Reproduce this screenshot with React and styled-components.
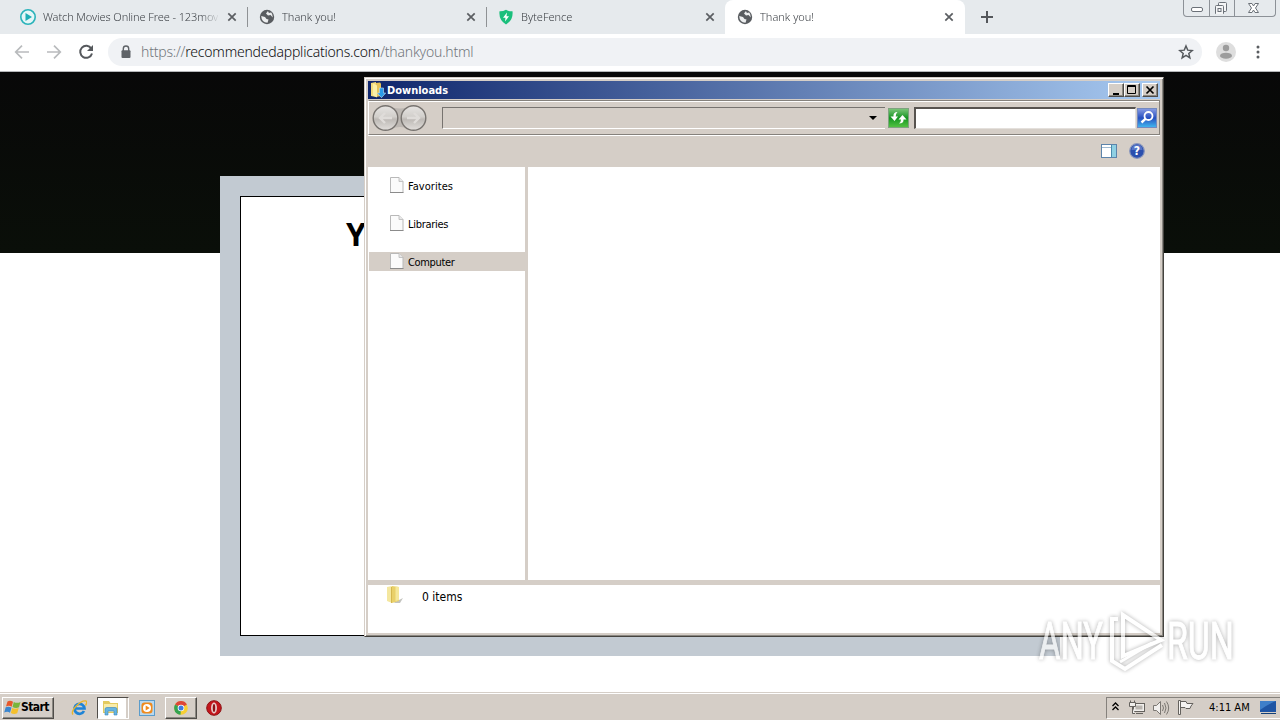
import styled, { createGlobalStyle, css } from "styled-components";

const tabs = [
  { id: 1, title: "Watch Movies Online Free - 123movi", icon: "play", spacing: -0.1 },
  { id: 2, title: "Thank you!", icon: "globe" },
  { id: 3, title: "ByteFence", icon: "shield" },
  { id: 4, title: "Thank you!", icon: "globe", active: true },
];

const folders = [
  { id: 1, name: "Favorites", spacing: 0.05 },
  { id: 2, name: "Libraries", spacing: -0.3 },
  { id: 3, name: "Computer", spacing: -0.35, active: true },
];

function App() {
  return (
    <Desktop>
      <GlobalStyle />
      <TabStrip>
        {tabs.map((tab) => (
          <Tab key={tab.id} $active={tab.active}>
            {tab.icon === "play" && <PlayIcon />}
            {tab.icon === "globe" && <GlobeIcon />}
            {tab.icon === "shield" && <ShieldIcon />}
            <TabTitle $spacing={tab.spacing}>{tab.title}</TabTitle>
            <CloseIcon />
          </Tab>
        ))}
        <NewTab>
          <svg width="12" height="12" viewBox="0 0 12 12">
            <path d="M6 0V12M0 6H12" stroke="#54575b" strokeWidth="2" />
          </svg>
        </NewTab>
        <Caption>
          <CaptionButton $width={25}>
            <svg width="14" height="14" viewBox="0 0 14 14" fill="none" stroke="#6b7178">
              <rect x="1.5" y="7.5" width="11" height="4" rx="1.5" fill="#fff" />
            </svg>
          </CaptionButton>
          <CaptionButton $width={25}>
            <svg width="14" height="14" viewBox="0 0 14 14" fill="#f4f5f6" stroke="#6b7178">
              <rect x="4.5" y="2.5" width="8" height="9" rx="1" />
              <rect x="1.5" y="5.5" width="8" height="9" rx="1" />
              <rect x="4" y="8.5" width="3" height="3" />
            </svg>
          </CaptionButton>
          <CaptionButton $width={41}>
            <svg width="14" height="14" viewBox="0 0 14 14" fill="#fff" stroke="#6b7178">
              <path d="M1.5 3.5H5L6.5 6 8 3.5H11.5L8.500 8 11.5 12.5H8L6.5 10 5 12.5H1.5L4.5 8Z" />
            </svg>
          </CaptionButton>
        </Caption>
      </TabStrip>

      <Toolbar>
        <NavIcons>
          <svg width="16" height="16" viewBox="0 0 16 16" fill="none" stroke="#b9bbbd" strokeWidth="1.7">
            <path d="M15 8H2M8 1.7L1.7 8 8 14.3" />
          </svg>
          <svg width="16" height="16" viewBox="0 0 16 16" fill="none" stroke="#b9bbbd" strokeWidth="1.7">
            <path d="M1 8H14M8 1.7L14.3 8 8 14.3" />
          </svg>
          <svg width="16" height="16" viewBox="0 0 16 16" fill="none" stroke="#55585c" strokeWidth="2">
            <path d="M13.3 4.6A6 6 0 1 0 14 9.5" />
            <path d="M15 1V7H9Z" fill="#55585c" stroke="none" />
          </svg>
        </NavIcons>
        <Omnibox>
          <svg width="10" height="14" viewBox="0 0 10 14">
            <path d="M2.3 6V3.7a2.7 2.7 0 0 1 5.4 0V6" fill="none" stroke="#5f6368" strokeWidth="1.4" />
            <rect x="0.5" y="5.2" width="9" height="7.8" rx="1" fill="#5f6368" />
          </svg>
          <Url>
            https://<b>recommendedapplications.com</b>/thankyou.html
          </Url>
          <svg width="16" height="16" viewBox="0 0 24 24" fill="none" stroke="#55595d" strokeWidth="2.2">
            <path d="M12 3l2.6 6.2 6.7.6-5.1 4.4 1.6 6.6L12 17.2l-5.8 3.6 1.6-6.6L2.7 9.8l6.7-.6z" />
          </svg>
        </Omnibox>
        <Avatar width="20" height="20" viewBox="0 0 20 20">
          <circle cx="10" cy="10" r="10" fill="#dedede" />
          <circle cx="10" cy="6" r="3.2" fill="#9c9c9c" />
          <ellipse cx="10" cy="13.7" rx="6" ry="3" fill="#9c9c9c" />
        </Avatar>
        <svg width="4" height="14" viewBox="0 0 4 14" fill="#5a5d61">
          <circle cx="2" cy="2" r="1.5" />
          <circle cx="2" cy="7" r="1.5" />
          <circle cx="2" cy="12" r="1.5" />
        </svg>
      </Toolbar>

      <Page>
        <Hero />
        <Card>
          <CardBody>
            <CardTitle>Y</CardTitle>
          </CardBody>
        </Card>
      </Page>

      <Explorer />
      <Taskbar />
      <Watermark />
    </Desktop>
  );
}

function Explorer() {
  return (
    <Window>
      <TitleBar>
        <svg width="16" height="16" viewBox="0 0 16 16">
          <path d="M1 1l5-1v15l-5-1z" fill="#f3dc7c" />
          <path d="M6 1l4-.5 1 1V14l-5 1z" fill="#e5c35a" />
          <path d="M3 1.5l4 2v12l-4-2z" fill="#fbf0a8" />
          <path d="M9.5 6h4v5h2.2l-4.2 4.7L7.3 11h2.2z" fill="#2b9be8" stroke="#bfe2fa" strokeWidth=".6" />
        </svg>
        <TitleText>Downloads</TitleText>
        <WindowButton>
          <svg width="10" height="10"><path d="M2 9H8" stroke="#000" strokeWidth="2" /></svg>
        </WindowButton>
        <WindowButton>
          <svg width="10" height="10" fill="none" stroke="#000"><path d="M.5 .5H8.5V8.5H.5ZM0 1.5H9" /></svg>
        </WindowButton>
        <WindowButton $gap>
          <svg width="10" height="10"><path d="M1.500 1.5L8.5 8.5M8.5 1.5L1.5 8.5" stroke="#000" strokeWidth="1.7" /></svg>
        </WindowButton>
      </TitleBar>
      <AddressBand>
        <svg width="55" height="28" viewBox="0 0 55 28">
          <defs>
            <linearGradient id="knob" x1="0" y1="0" x2="0" y2="1">
              <stop offset="0" stopColor="#e6e4e2" />
              <stop offset=".45" stopColor="#d2cfcb" />
              <stop offset=".55" stopColor="#bdb9b5" />
              <stop offset="1" stopColor="#e2dfdc" />
            </linearGradient>
          </defs>
          <path d="M14 2Q28 7 42 2V26Q28 20 14 26Z" fill="#bcb7b2" />
          <g fill="url(#knob)" stroke="#77736f" strokeWidth="1.4">
            <circle cx="13.5" cy="14" r="12.3" />
            <circle cx="41.5" cy="14" r="12.3" />
          </g>
          <g fill="none" stroke="#dfdcd9" strokeWidth="2.4">
            <path d="M20 14H8M13 9L8 14L13 19" />
            <path d="M35 14H47M42 9L47 14L42 19" />
          </g>
        </svg>
        <Address>
          <svg width="8" height="4"><path d="M0 0H8L4 4Z" fill="#000" /></svg>
        </Address>
        <svg width="21" height="20" viewBox="0 0 21 20">
          <defs>
            <linearGradient id="go" x1="0" y1="0" x2="0" y2="1">
              <stop offset="0" stopColor="#7fc77c" />
              <stop offset=".5" stopColor="#159522" />
              <stop offset="1" stopColor="#55c443" />
            </linearGradient>
          </defs>
          <rect x=".5" y=".5" width="20" height="19" fill="url(#go)" stroke="#7fa380" />
          <path d="M9.5 4Q5 4 5.5 8.5H2.5L6.5 13L10 8.5H7.7Q7.5 6 9.5 4Z" fill="#fff" />
          <path d="M11 15.5Q16 15.5 15.5 11.5H18.5L14.5 7L10.5 11.5H13Q13 14 11 15.5Z" fill="#fff" />
        </svg>
        <SearchBox />
        <svg width="20" height="20" viewBox="0 0 20 20">
          <defs>
            <linearGradient id="find" x1="0" y1="0" x2="0" y2="1">
              <stop offset="0" stopColor="#8a9ee4" />
              <stop offset=".5" stopColor="#274fc0" />
              <stop offset="1" stopColor="#42baf0" />
            </linearGradient>
          </defs>
          <rect x=".5" y=".5" width="19" height="19" fill="url(#find)" stroke="#7389c0" />
          <circle cx="11.5" cy="8" r="4" fill="none" stroke="#fff" strokeWidth="1.8" />
          <path d="M8.7 10.7L4.5 14.5" stroke="#fff" strokeWidth="2.4" />
        </svg>
      </AddressBand>
      <CommandBar>
        <svg width="16" height="14" viewBox="0 0 16 14">
          <rect x=".5" y=".5" width="15" height="13" fill="#fff" stroke="#5c84ab" />
          <path d="M1 3.5H10" stroke="#9eb9d1" />
          <rect x="10" y="1" width="5" height="12" fill="#8fd0e3" />
          <path d="M10.5 1V13" stroke="#4a8bad" />
        </svg>
        <svg width="16" height="16" viewBox="0 0 16 16">
          <circle cx="8" cy="8" r="7.3" fill="#2b4fae" stroke="#8795bd" strokeWidth="1.2" />
          <path d="M2.5 7A5.5 5.5 0 0 1 13.5 7Z" fill="#5674c6" />
          <HelpMark x="8" y="12.3">?</HelpMark>
        </svg>
      </CommandBar>
      <Panes>
        <Sidebar>
          {folders.map((folder) => (
            <FolderItem key={folder.id} $active={folder.active} $spacing={folder.spacing}>
              <svg width="14" height="16" viewBox="0 0 14 16">
                <path d="M.5 .5H9L13 4.5V15.5H.5Z" fill="#fbfbfb" stroke="#b9b9b9" />
                <path d="M9 .5V4.5H13" fill="#e8e8e8" stroke="#b9b9b9" strokeWidth=".8" />
                <path d="M0 15.5H13.5" stroke="#8b8b8b" />
              </svg>
              <span>{folder.name}</span>
            </FolderItem>
          ))}
        </Sidebar>
        <FileList />
      </Panes>
      <Details>
        <svg width="18" height="20" viewBox="0 0 18 20">
          <path d="M9 17l8-4-3 5H8z" fill="#a9a9a2" opacity=".7" />
          <path d="M1 2l5-1v17l-5-2z" fill="#f4e79f" />
          <path d="M6 1l7 1v14l-7 2z" fill="#e9d069" />
          <path d="M9.5 1.5l3.5.5v13l-3.5 1z" fill="#f5e79a" />
          <path d="M5.5 2V18" stroke="#d5b74f" />
        </svg>
        <span>0 items</span>
      </Details>
    </Window>
  );
}

function Taskbar() {
  return (
    <TaskbarRow>
      <StartButton>
        <svg width="17" height="16" viewBox="0 0 17 16">
          <path d="M3.5 1.5Q6 0 9 1.7L7.7 6.7Q5 5 2 6.5Z" fill="#e8582a" />
          <path d="M9.8 2Q13 3.7 16.5 2L15 7.2Q12 8.7 8.5 7Z" fill="#79b53b" />
          <path d="M1.7 7.3Q4.5 6 7.5 7.6L6 12.7Q3.5 11 .2 12.5Z" fill="#3b86cf" />
          <path d="M8.2 8Q11 9.6 14.7 8L13.2 13.2Q10 14.7 6.8 13Z" fill="#f5c02c" />
        </svg>
        <span>Start</span>
      </StartButton>
      <Launch $width={32}>
        <svg width="16" height="16" viewBox="0 0 16 16" fill="none">
          <path d="M13 11A5 5 0 1 1 13.5 8.5H5" stroke="#1f84d6" strokeWidth="2.7" />
          <path d="M2 14.5C-1 11 9.5 0 15 1 16.500 1.8 15.5 4 14.5 5.5" stroke="#e9b52b" strokeWidth="1.4" />
        </svg>
      </Launch>
      <Launch $width={32} $pressed>
        <svg width="18" height="17" viewBox="0 0 18 17">
          <path d="M1 2H7L8.5 4H16V14H1Z" fill="#e3ca60" />
          <path d="M2 5H15V13H2Z" fill="#f8ecaa" />
          <path d="M3 16V10Q3 8.5 5 8.5H13Q15 8.5 15 10V16H12V12H6V16Z" fill="#65b5e2" stroke="#3b83b8" strokeWidth=".6" />
        </svg>
      </Launch>
      <Launch $width={33}>
        <svg width="16" height="16" viewBox="0 0 16 16">
          <rect x=".5" y=".5" width="15" height="15" fill="#b9d8ef" stroke="#5b9ccb" />
          <rect x="2.5" y="2.5" width="11" height="11" rx="3" fill="#f08a1d" />
          <circle cx="8" cy="8" r="4" fill="#fff" />
          <path d="M6.7 5.5L10.7 8L6.7 10.5Z" fill="#f08a1d" />
        </svg>
      </Launch>
      <Launch $width={32} $raised>
        <svg width="14" height="14" viewBox="0 0 14 14">
          <circle cx="7" cy="7" r="6.8" fill="#f7cf33" />
          <path d="M7 7L1.1 3.5A6.8 6.8 0 0 1 12.9 3.5Z" fill="#dd4638" />
          <path d="M7 7L1.1 3.5A6.8 6.8 0 0 0 6.5 13.8Z" fill="#35a350" />
          <circle cx="7" cy="7" r="3.3" fill="#fff" />
          <circle cx="7" cy="7" r="2.5" fill="#3e7be0" />
        </svg>
      </Launch>
      <Launch $width={32}>
        <svg width="16" height="16" viewBox="0 0 16 16">
          <circle cx="8" cy="8" r="7.3" fill="#c4161c" stroke="#8d1114" />
          <ellipse cx="8" cy="8" rx="2.3" ry="5" fill="#d9c4c0" stroke="#f2dddd" />
          <ellipse cx="8" cy="8" rx="1.2" ry="4" fill="#8c1114" />
        </svg>
      </Launch>
      <Tray>
        <Chevron width="7" height="9" viewBox="0 0 7 9">
          <path d="M.5 4L3.5 1L6.5 4M.5 8L3.5 5L6.5 8" />
        </Chevron>
        <svg width="16" height="15" viewBox="0 0 16 15" fill="#f1efec" stroke="#65625e">
          <rect x="4.5" y="3.5" width="11" height="8" />
          <rect x="6.5" y="5.5" width="7" height="4" fill="#b9b5b0" stroke="none" />
          <path d="M7 13.5H14M1.5 .5V3M5.5 .5V3M.5 2.5H6.5V6.5H.5ZM3.5 7V13.5H6" />
        </svg>
        <svg width="17" height="16" viewBox="0 0 17 16" fill="none" stroke="#7b7772">
          <path d="M.5 5.5H3.5L7.5 1.5V14.5L3.5 10.5H.5Z" fill="#f1efed" />
          <path d="M9.5 5Q11.5 8 9.5 11M11.5 3Q14.5 8 11.5 13M13.5 1.5Q17.8 8 13.5 14.5" />
        </svg>
        <svg width="17" height="16" viewBox="0 0 17 16" fill="#f6f4f2" stroke="#65625e">
          <path d="M.5 .5H2.5V14.5H.5ZM2.5 1.500H8L9 3.5H15L13 6 12 8.5H8L7 7.5H2.500Z" />
        </svg>
        <Clock>4:11 AM</Clock>
        <svg width="16" height="14" viewBox="0 0 16 14">
          <rect x="0" y="0" width="16" height="11" fill="#1f55a4" />
          <path d="M0 0H16Q8 3 0 9Z" fill="#3f7fc9" />
          <path d="M1 12.5H16" stroke="#123f77" />
        </svg>
      </Tray>
    </TaskbarRow>
  );
}

function Watermark() {
  return (
    <WatermarkSvg width="240" height="84" viewBox="0 0 240 84">
      <WatermarkText x="9" y="54" textLength="64" lengthAdjust="spacingAndGlyphs">ANY</WatermarkText>
      <WatermarkText x="137" y="54" textLength="67" lengthAdjust="spacingAndGlyphs">RUN</WatermarkText>
      <g fill="none" stroke="#fff" strokeWidth="4">
        <path d="M93 10L131 35L93 51Z" />
        <path d="M88 14H82V56L95 64L132 40" />
        <path d="M90 57L122 38" strokeWidth="3" />
      </g>
    </WatermarkSvg>
  );
}

const PlayIcon = () => (
  <svg width="16" height="16" viewBox="0 0 16 16">
    <circle cx="8" cy="8" r="7.2" fill="#e4f6f7" stroke="#2bb3ba" strokeWidth="1.6" />
    <path d="M5.5 4L12 8L5.5 12Z" fill="#1eadb5" />
  </svg>
);

const GlobeIcon = () => (
  <svg width="16" height="16" viewBox="0 0 16 16">
    <circle cx="8" cy="8" r="7.2" fill="#595c60" />
    <path d="M9 2L7 4.5 9 6.5 11.5 6 13.8 8.5Q14 5 12 3.2L11 4 9.5 3.5ZM2.2 7L6 8 7.5 10 9.5 10.5 8.5 13.8Q2.5 13.5 2.2 7Z" fill="#eceeef" />
  </svg>
);

const ShieldIcon = () => (
  <svg width="16" height="16" viewBox="0 0 16 16">
    <path d="M8 .8Q11 2.5 14.5 2.3Q15.5 11 8 15.5Q.5 11 1.5 2.3Q5 2.5 8 .8Z" fill="#1abf7c" />
    <path d="M9 3.5L5 8.7H7.5L7 12.5L11 7.3H8.5Z" fill="#fff" />
  </svg>
);

const CloseIcon = () => (
  <svg width="10" height="10" viewBox="0 0 10 10">
    <path d="M1.3 1.3L8.7 8.7M8.7 1.3L1.3 8.7" stroke="#5b5e62" strokeWidth="1.7" />
  </svg>
);

const face = "#d5cec7";

const GlobalStyle = createGlobalStyle`
  * {
    box-sizing: border-box;
  }
  body {
    margin: 0;
    overflow: hidden;
    font-family: "DejaVu Sans Condensed", "DejaVu Sans", sans-serif;
    font-size: 11px;
    color: #000;
  }
  svg {
    display: block;
    flex-shrink: 0;
  }
`;

const Desktop = styled.div`
  position: relative;
  display: flex;
  flex-direction: column;
  width: 1280px;
  height: 720px;
  overflow: hidden;
  background: #fff;
`;

const TabStrip = styled.div`
  display: flex;
  height: 34px;
  padding-left: 8px;
  background: #e6eaed;
`;

const Tab = styled.div`
  display: flex;
  align-items: center;
  width: 239px;
  padding: 0 10px 0 12px;

  /* divider between two inactive tabs */
  &:nth-child(2),
  &:nth-child(3) {
    background: linear-gradient(#8f9295, #8f9295) left 0 center / 1px 20px no-repeat;
  }

  ${({ $active }) =>
    $active &&
    css`
      width: 240px;
      padding-right: 11px;
      border-radius: 8px 8px 0 0;
      background: #fff;
    `}
`;

const TabTitle = styled.div`
  flex: 1;
  min-width: 0;
  margin: 0 9px 0 7px;
  padding-bottom: 2px;
  white-space: nowrap;
  font-family: "Noto Sans", sans-serif;
  font-size: 11px;
  font-weight: 300;
  letter-spacing: ${({ $spacing }) => $spacing || 0}px;
  color: #3d4146;
  mask-image: linear-gradient(to right, #000 158px, transparent 177px);
`;

const NewTab = styled.div`
  display: flex;
  align-items: center;
  margin-left: 16px;
`;

const Caption = styled.div`
  display: flex;
  height: 17px;
  margin: 0 4px 0 auto;
  border: 1px solid #8c9197;
  border-top: 0;
  border-radius: 0 0 4px 4px;
`;

const CaptionButton = styled.div`
  display: flex;
  justify-content: center;
  width: ${({ $width }) => $width}px;

  & + & {
    padding-right: 2px;
    border-left: 1px solid #8c9197;
  }
`;

const Toolbar = styled.div`
  display: flex;
  align-items: center;
  height: 38px;
  padding: 0 20px 2px 14px;
  border-bottom: 1px solid #b5b7b9;
  background: #fff;
`;

const NavIcons = styled.div`
  display: flex;
  gap: 16px;
`;

const Omnibox = styled.div`
  display: flex;
  align-items: center;
  width: 1095px;
  height: 28px;
  margin-left: 14px;
  padding: 0 8px 0 13px;
  border-radius: 14px;
  background: #f0f2f5;
`;

const Url = styled.div`
  flex: 1;
  padding-left: 10px;
  font-family: "Noto Sans", sans-serif;
  font-size: 14px;
  font-weight: 300;
  letter-spacing: -0.21px;
  color: #72777c;

  b {
    font-weight: 300;
    color: #0c0d0e;
  }
`;

const Avatar = styled.svg`
  margin: 0 20px 0 14px;
`;

const Page = styled.div`
  display: grid;
  flex: 1;
  justify-items: center;
`;

const Hero = styled.div`
  grid-area: 1 / 1;
  width: 100%;
  height: 181px;
  background: linear-gradient(#080808, #0a0f09);
`;

const Card = styled.div`
  grid-area: 1 / 1;
  width: 840px;
  height: 480px;
  margin-top: 104px;
  padding: 20px;
  background: #c2cad2;
`;

const CardBody = styled.div`
  height: 440px;
  padding: 15px 0 0 105px;
  border: 1px solid #000;
  background: #fff;
`;

const CardTitle = styled.h1`
  margin: 0;
  font-family: "Open Sans", sans-serif;
  font-size: 32px;
  line-height: 44px;
`;

const Window = styled.div`
  position: absolute;
  top: 77px;
  left: 364px;
  display: flex;
  flex-direction: column;
  width: 800px;
  height: 560px;
  padding: 2px;
  border: 1px solid;
  border-color: ${face} #45433f #45433f ${face};
  background: ${face};
  box-shadow: inset 1px 1px #fff, inset -1px -1px #8b8882;
`;

const TitleBar = styled.div`
  display: flex;
  align-items: center;
  height: 18px;
  margin: 1px;
  padding: 0 2px;
  background: linear-gradient(to right, #0f266c, #a8caf1);
`;

const TitleText = styled.div`
  flex: 1;
  padding-left: 1px;
  font-weight: bold;
  color: #fff;
`;

const bevel = css`
  border: 1px solid;
  border-color: #fff #504d49 #504d49 #fff;
  background: ${face};
  box-shadow: inset -1px -1px #8b8882;
`;

const WindowButton = styled.div`
  display: flex;
  width: 16px;
  height: 14px;
  margin-left: ${({ $gap }) => ($gap ? 2 : 0)}px;
  padding: 1px 0 0 2px;
  ${bevel}
`;

const AddressBand = styled.div`
  display: flex;
  align-items: center;
  height: 35px;
  margin: 0 1px;
  padding-left: 3px;
  border: 1px solid #85817c;
  border-left-color: #fff;
  box-shadow: inset 0 1px #fff, 0 1px #fff;
`;

const Address = styled.div`
  display: flex;
  align-items: center;
  justify-content: flex-end;
  width: 443px;
  height: 22px;
  margin: 0 3px 0 15px;
  padding-right: 8px;
  border: 1px solid #77736f;
  border-right: 0;
  border-bottom-color: #fff;
`;

const SearchBox = styled.div`
  width: 222px;
  height: 22px;
  margin: 0 1px 0 5px;
  border: solid;
  border-color: #57534f #e4e0dc #e4e0dc #57534f;
  border-width: 2px 1px 1px 2px;
  background: #fff;
`;

const CommandBar = styled.div`
  display: flex;
  align-items: center;
  justify-content: flex-end;
  gap: 12px;
  height: 32px;
  padding-right: 16px;
`;

const HelpMark = styled.text`
  fill: #fff;
  font-size: 12px;
  font-weight: bold;
  text-anchor: middle;
`;

const Panes = styled.div`
  display: flex;
  gap: 3px;
  height: 413px;
  margin: 0 1px;
`;

const Sidebar = styled.div`
  display: flex;
  flex-direction: column;
  gap: 19px;
  width: 157px;
  padding: 9px 0 0 1px;
  background: #fff;
`;

const FolderItem = styled.div`
  display: flex;
  align-items: center;
  gap: 4px;
  height: 19px;
  padding-left: 21px;
  letter-spacing: ${({ $spacing }) => $spacing}px;
  background: ${({ $active }) => ($active ? face : "none")};

  svg {
    margin-top: -2px;
  }

  span {
    padding-top: 1px;
  }
`;

const FileList = styled.div`
  flex: 1;
  background: #fff;
`;

const Details = styled.div`
  display: flex;
  align-items: flex-start;
  gap: 18px;
  height: 48px;
  margin: 5px 1px 0;
  padding-left: 18px;
  background: #fff;
  font-size: 12px;
  line-height: 25px;
`;

const TaskbarRow = styled.div`
  display: flex;
  align-items: center;
  height: 28px;
  padding: 2px 0 0 2px;
  border-top: 1px solid ${face};
  background: ${face};
  box-shadow: inset 0 1px #fff;
`;

const StartButton = styled.div`
  display: flex;
  align-items: center;
  width: 52px;
  height: 22px;
  margin-right: 9px;
  padding-left: 1px;
  font-size: 12px;
  font-weight: bold;
  letter-spacing: -0.6px;
  ${bevel}

  span {
    margin-top: -2px;
  }
`;

const Launch = styled.div`
  display: flex;
  align-items: center;
  justify-content: center;
  width: ${({ $width }) => $width}px;
  height: 22px;
  margin-right: 1.5px;
  border: 1px solid transparent;
  ${({ $raised }) => $raised && bevel}
  ${({ $pressed }) =>
    $pressed &&
    css`
      padding-right: 4px;
      border-color: #504d49 #fff #fff #504d49;
      background: #fff;
      box-shadow: inset -2px 0 ${face}, inset -3px 0 #fff;
    `}
`;

const Tray = styled.div`
  display: flex;
  align-items: center;
  gap: 8px;
  width: 174px;
  height: 22px;
  margin-left: auto;
  padding-left: 5px;
  border: 1px solid #85817c;
  border-right: 0;
  border-bottom-color: #fff;
`;

const Chevron = styled.svg`
  margin: -3px 2px 0 0;
  fill: none;
  stroke: #000;
  stroke-width: 1.3px;
`;

const Clock = styled.span`
  margin: -1px 2px 0 6px;
  white-space: nowrap;
`;

const WatermarkSvg = styled.svg`
  position: absolute;
  top: 605px;
  left: 1030px;
  opacity: 0.7;
  filter: drop-shadow(0 0 2px rgba(0, 0, 0, 0.45));
`;

const WatermarkText = styled.text`
  fill: #fff;
  stroke: #fff;
  stroke-width: 1px;
  font-family: "Roboto", "Liberation Sans", sans-serif;
  font-size: 52px;
`;

export default App;
